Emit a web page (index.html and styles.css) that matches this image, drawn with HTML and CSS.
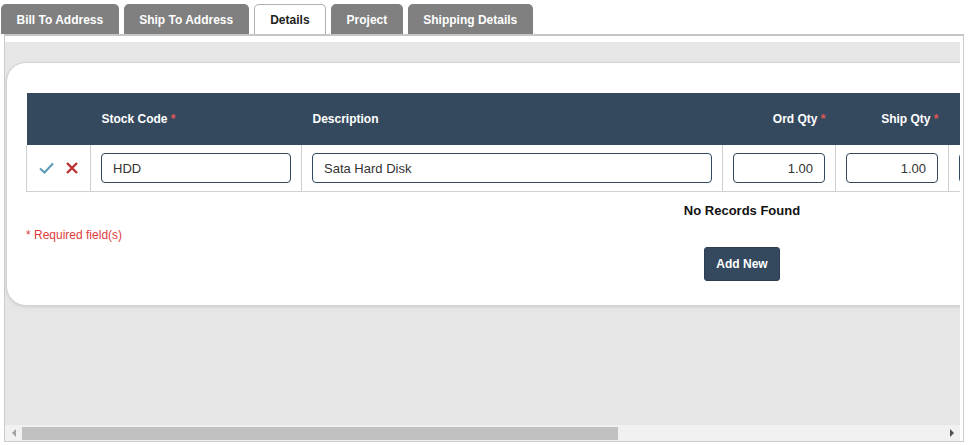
FILE: index.html
```html
<!DOCTYPE html>
<html lang="en">

<head>
    <meta charset="UTF-8">
    <meta name="viewport" content="width=device-width, initial-scale=1.0">
    <title>Sales Order Details</title>
    <link rel="stylesheet" href="styles.css">
</head>

<body>
    <!-- Tab strip -->
    <div class="tabs">
        <div class="tab">Bill To Address</div>
        <div class="tab">Ship To Address</div>
        <div class="tab active">Details</div>
        <div class="tab">Project</div>
        <div class="tab">Shipping Details</div>
    </div>

    <div class="panel">
        <div class="scroll-area">
            <div class="scroll-content">
                <div class="card">
                    <table class="grid">
                        <colgroup>
                            <col style="width: 64px">
                            <col style="width: 211px">
                            <col style="width: 421px">
                            <col style="width: 113px">
                            <col style="width: 113px">
                            <col style="width: 113px">
                            <col style="width: 113px">
                            <col style="width: 113px">
                            <col style="width: 171px">
                        </colgroup>
                        <thead>
                            <tr>
                                <th></th>
                                <th>Stock Code <span class="req">*</span></th>
                                <th>Description</th>
                                <th class="num">Ord Qty <span class="req">*</span></th>
                                <th class="num">Ship Qty <span class="req">*</span></th>
                                <!-- columns scrolled out of view -->
                                <th class="num"></th>
                                <th class="num"></th>
                                <th class="num"></th>
                                <th class="num"></th>
                            </tr>
                        </thead>
                        <tbody>
                            <tr>
                                <td class="actions">
                                    <svg width="15" height="12" viewBox="0 0 15 12">
                                        <polyline points="1,6.5 5.5,10.5 14,1.5" fill="none" stroke="#5f9db8" stroke-width="2.2"/>
                                    </svg>
                                    <svg width="12" height="12" viewBox="0 0 12 12">
                                        <path d="M1 1 L11 11 M11 1 L1 11" stroke="#b83232" stroke-width="2.4"/>
                                    </svg>
                                </td>
                                <td><input type="text" value="HDD"></td>
                                <td><input type="text" value="Sata Hard Disk"></td>
                                <td><input type="text" class="num" value="1.00"></td>
                                <td><input type="text" class="num" value="1.00"></td>
                                <td><input type="text" class="num"></td>
                                <td><input type="text" class="num"></td>
                                <td><input type="text" class="num"></td>
                                <td><input type="text" class="num"></td>
                            </tr>
                        </tbody>
                    </table>

                    <div class="no-records">No Records Found</div>

                    <div class="card-footer">
                        <div class="required-note">* Required field(s)</div>
                        <button class="add-button">Add New</button>
                        <div></div>
                    </div>
                </div>
            </div>

            <!-- Horizontal scrollbar -->
            <div class="hscroll">
                <div class="arrow left"></div>
                <div class="track">
                    <div class="thumb"></div>
                </div>
                <div class="arrow right"></div>
            </div>
        </div>
    </div>
</body>

</html>
```

FILE: styles.css
```css
/* Page basics */
body {
    margin: 0;
    font-family: "Liberation Sans", Arial, sans-serif;
    background-color: white;
    color: #222;
}

/* Tab strip */
.tabs {
    display: flex;
    padding: 4px 0 0 1px;
}

.tab {
    height: 30px;
    line-height: 30px;
    padding: 0 14.5px;
    margin-right: 5px;
    box-sizing: border-box;
    background-color: #808080;
    border: 1px solid #808080;
    border-bottom: none;
    border-radius: 5px 5px 0 0;
    color: white;
    font-size: 12px;
    font-weight: bold;
}

.tab.active {
    padding: 0 15.5px;
    background-color: white;
    border-color: #b0b0b0;
    color: #222;
}

/* Panel under the tabs */
.panel {
    margin: 0 4px;
    padding: 6px 3px 0 0;
    border: 1px solid #cbcbcb;
    border-top: 2px solid #c6c6c6;
}

.scroll-area {
    background-color: #e6e6e6;
}

.scroll-content {
    height: 383px;
    overflow: hidden;
    padding: 20px 0 0 1px;
    box-sizing: border-box;
}

/* White rounded card holding the grid */
.card {
    width: 1472px;
    box-sizing: border-box;
    padding: 30px 19px 24px;
    background-color: white;
    border: 1px solid #d2d2d2;
    border-radius: 20px;
    box-shadow: 0 1px 3px rgba(0, 0, 0, 0.1);
}

/* Grid table */
.grid {
    width: 1432px;
    table-layout: fixed;
    border-collapse: collapse;
}

.grid th {
    height: 52px;
    padding: 0 10px 0 11px;
    background-color: #34495e;
    color: white;
    font-size: 12px;
    font-weight: bold;
    text-align: left;
    white-space: nowrap;
}

.grid th.num {
    text-align: right;
}

.req {
    color: #e05555;
}

.grid td {
    height: 45px;
    padding: 0 10px;
    border: 1px solid #d0d0d0;
    border-top: none;
    vertical-align: middle;
}

.grid td.actions {
    text-align: center;
    padding: 1px 0 0;
}

.grid td.actions svg {
    margin: 0 4px;
}

.grid input {
    display: block;
    width: 100%;
    height: 30px;
    box-sizing: border-box;
    padding: 0 11px;
    margin-top: 0;
    border: 1px solid #34495e;
    border-radius: 4px;
    font-family: "Liberation Sans", Arial, sans-serif;
    font-size: 13px;
    color: #333;
}

.grid input.num {
    text-align: right;
}

/* Messages and footer */
.no-records {
    margin-top: 11px;
    text-align: center;
    font-size: 13px;
    font-weight: bold;
    line-height: 15px;
    color: #111;
}

.card-footer {
    display: grid;
    grid-template-columns: 1fr auto 1fr;
    margin-top: 10px;
}

.required-note {
    color: #dd3c3c;
    font-size: 12px;
    line-height: 14px;
}

.add-button {
    height: 34px;
    margin-top: 19px;
    padding: 0 11px;
    background-color: #34495e;
    border: 1px solid #2c3e50;
    border-radius: 3px;
    color: white;
    font-family: "Liberation Sans", Arial, sans-serif;
    font-size: 12px;
    font-weight: bold;
}

/* Fake horizontal scrollbar */
.hscroll {
    display: flex;
    height: 16px;
    background-color: #f1f1f1;
}

.arrow {
    width: 17px;
    display: flex;
    align-items: center;
    justify-content: center;
}

.arrow::before {
    content: "";
    border-top: 4px solid transparent;
    border-bottom: 4px solid transparent;
}

.arrow.left::before {
    border-right: 4px solid #a3a3a3;
}

.arrow.right::before {
    border-left: 4px solid #505050;
}

.track {
    flex: 1;
    padding-top: 2px;
}

.thumb {
    width: 596px;
    height: 13px;
    background-color: #c1c1c1;
}
```
